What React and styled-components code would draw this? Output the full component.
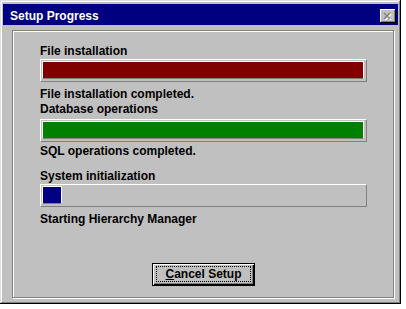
import styled, { createGlobalStyle } from 'styled-components';

const GlobalStyle = createGlobalStyle`
    html, body {
        margin: 0;
        padding: 0;
        background: #ffffff;
    }
    body {
        font-family: "Liberation Sans", Arial, sans-serif;
        font-size: 12px;
        font-weight: bold;
    }
`;

const Window = styled.div`
    display: flex;
    flex-direction: column;
    box-sizing: border-box;
    width: 401px;
    height: 304px;
    padding: 4px 3px 2px 3px;
    background: #c0c0c0;
    box-shadow:
        inset -1px -1px 0 #000000,
        inset 1px 1px 0 #dfdfdf,
        inset -2px -2px 0 #808080,
        inset 2px 2px 0 #ffffff;
`;

const TitleBar = styled.div`
    display: flex;
    align-items: flex-start;
    justify-content: space-between;
    height: 21px;
    padding: 0 2px 0 7px;
    background: #000080;
    color: #ffffff;
`;

const TitleText = styled.span`
    margin-top: 5px;
    line-height: 14px;
`;

const CloseButton = styled.div`
    display: flex;
    align-items: center;
    justify-content: center;
    box-sizing: border-box;
    width: 16px;
    height: 14px;
    margin-top: 5px;
    background: #c0c0c0;
    box-shadow:
        inset -1px -1px 0 #000000,
        inset 1px 1px 0 #ffffff,
        inset -2px -2px 0 #808080;
`;

const Panel = styled.div`
    flex: 1;
    display: flex;
    flex-direction: column;
    margin: 5px 4px 4px 9px;
    padding: 0 26px 0 27px;
    border: 1px solid #808080;
    box-shadow: 1px 1px 0 #ffffff, inset 1px 1px 0 #ffffff;
`;

const Text = styled.div`
    line-height: 14px;
    color: #000000;
    margin-top: ${(p) => p.$mt || 0}px;
    white-space: nowrap;
`;

const Track = styled.div`
    display: flex;
    box-sizing: border-box;
    height: 23px;
    margin-top: ${(p) => p.$mt || 0}px;
    padding: 1px 2px 2px 1px;
    border: 1px solid;
    border-color: #ffffff #808080 #808080 #ffffff;
`;

const Fill = styled.div`
    box-sizing: border-box;
    width: ${(p) => p.$width};
    height: 100%;
    background: ${(p) => p.$color};
    border: 1px solid;
    border-color: #ffffff #ffffff #808080 #ffffff;
`;

const Button = styled.button`
    display: flex;
    align-self: center;
    box-sizing: border-box;
    width: 103px;
    height: 23px;
    margin-top: 37px;
    padding: 2px 3px 3px 3px;
    border: 1px solid #000000;
    background: #c0c0c0;
    box-shadow:
        inset 1px 1px 0 #ffffff,
        inset -1px -1px 0 #000000,
        inset -2px -2px 0 #808080;
    font: inherit;
    color: #000000;
    cursor: pointer;
`;

const FocusBox = styled.span`
    flex: 1;
    display: flex;
    align-items: center;
    justify-content: center;
    border: 1px dotted #000000;
    line-height: 14px;
`;

const Hotkey = styled.span`
    text-decoration: underline;
`;

function CloseIcon() {
    return (
        <svg width="10" height="9" viewBox="0 0 10 9">
            <path d="M2 2 L8 8 M8 2 L2 8" stroke="#ffffff" strokeWidth="1.6" />
            <path d="M1 1 L7 7 M7 1 L1 7" stroke="#808080" strokeWidth="1.6" />
        </svg>
    );
}

const steps = [
    { label: 'File installation', status: 'File installation completed.', color: '#800000', width: '100%', top: 13 },
    { label: 'Database operations', status: 'SQL operations completed.', color: '#008000', width: '100%', top: 1 },
    { label: 'System initialization', status: 'Starting Hierarchy Manager', color: '#000080', width: '20px', top: 11 },
];

export default function App() {
    return (
        <>
            <GlobalStyle />
            <Window>
                <TitleBar>
                    <TitleText>Setup Progress</TitleText>
                    <CloseButton>
                        <CloseIcon />
                    </CloseButton>
                </TitleBar>
                <Panel>
                    {steps.map((s, i) => (
                        <div key={s.label} style={{ display: 'flex', flexDirection: 'column' }}>
                            <Text $mt={s.top}>{s.label}</Text>
                            <Track $mt={i === 1 ? 3 : 1}>
                                <Fill $color={s.color} $width={s.width} />
                            </Track>
                            <Text $mt={i === 1 ? 2 : 5}>{s.status}</Text>
                        </div>
                    ))}
                    <Button>
                        <FocusBox>
                            <Hotkey>C</Hotkey>ancel Setup
                        </FocusBox>
                    </Button>
                </Panel>
            </Window>
        </>
    );
}
